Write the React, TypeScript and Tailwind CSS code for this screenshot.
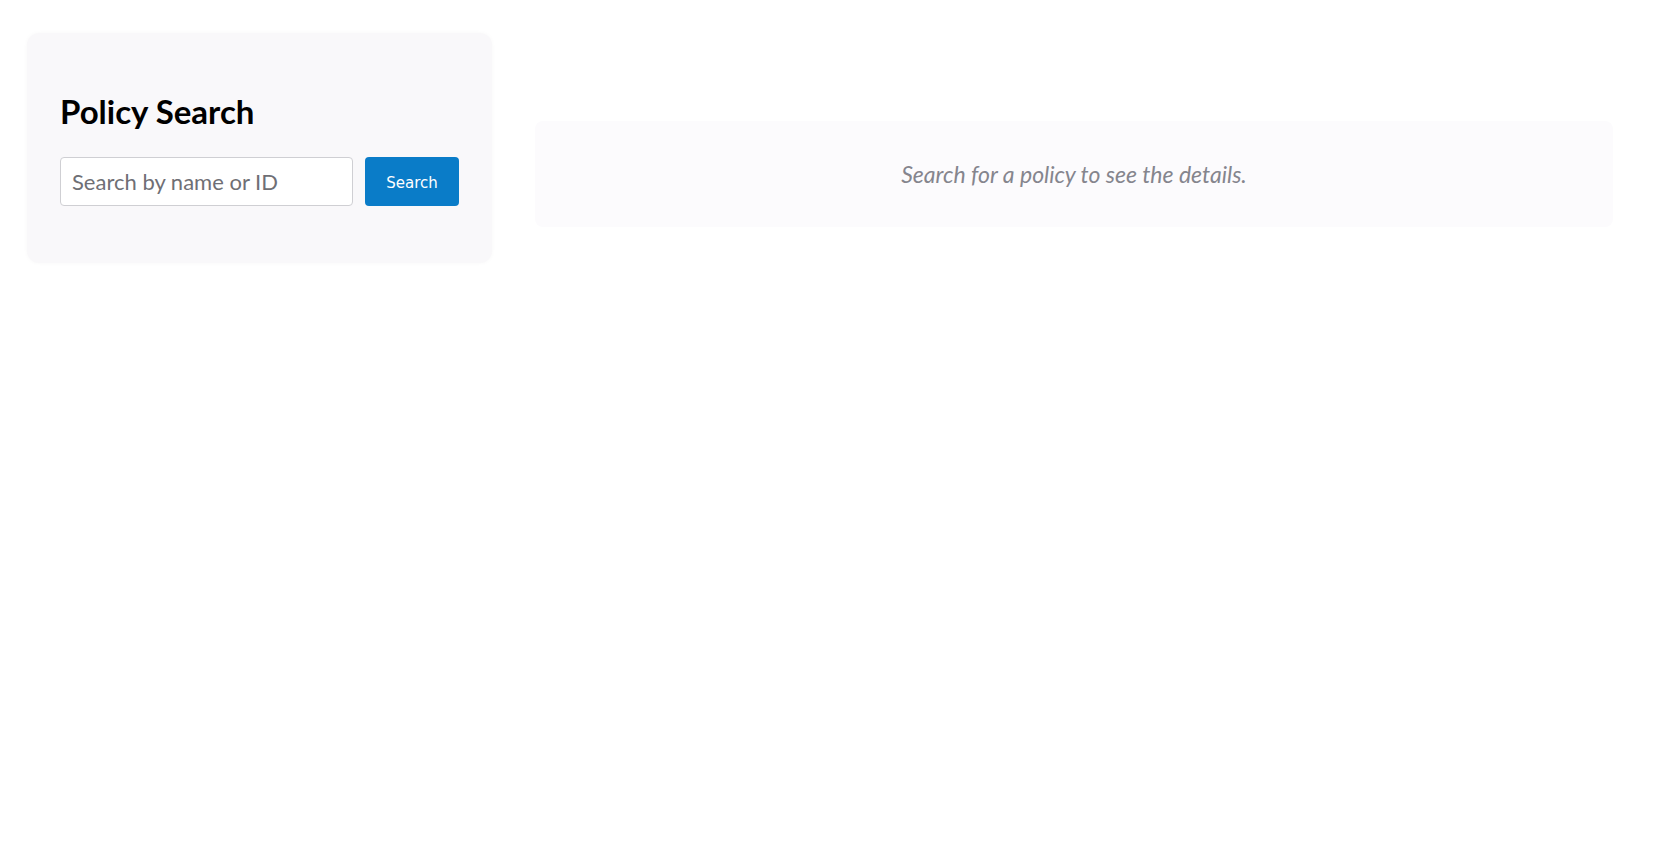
import { useState } from 'react';

export default function App() {
  const [query, setQuery] = useState('');

  return (
    <div className="min-h-screen bg-white font-['Lato','Noto_Sans',sans-serif]">
      <div className="flex items-start gap-[43px] pl-[27px] pr-[47px] pt-[33px]">
        {/* Search card */}
        <div className="w-[465px] shrink-0 rounded-xl bg-[#f9f8fa] px-[33px] pt-[58px] pb-[57px] shadow-[0_0_4px_rgba(0,0,0,0.03)]">
          <h2 className="text-[33px] font-bold leading-[40px] text-black">Policy Search</h2>
          <div className="mt-[26px] flex gap-3">
            <input
              value={query}
              onChange={(e) => setQuery(e.target.value)}
              placeholder="Search by name or ID"
              className="h-[49px] w-[293px] rounded border border-[#cfcfd3] bg-white px-[11px] text-[22px] text-gray-800 placeholder:text-[#6f6f75] focus:outline-none"
            />
            <button className="h-[49px] w-[95px] rounded bg-[#0a7cc8] pt-[3px] font-['DejaVu_Sans',sans-serif] text-[15px] text-white">
              Search
            </button>
          </div>
        </div>

        {/* Details panel */}
        <div className="mt-[88px] flex h-[106px] flex-1 items-center justify-center rounded-lg bg-[#fcfbfd]">
          <p className="text-[23px] italic text-[#85858d]">Search for a policy to see the details.</p>
        </div>
      </div>
    </div>
  );
}
